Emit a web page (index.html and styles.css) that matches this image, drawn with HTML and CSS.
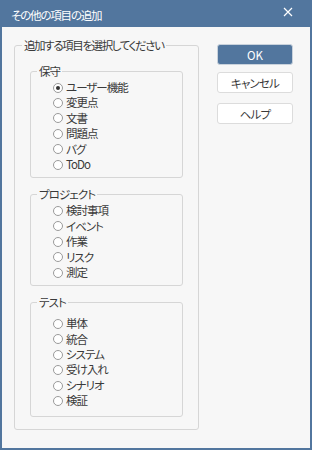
FILE: index.html
```html
<!doctype html>
<html>
    <head>
        <meta charset="utf-8">
        <title>その他の項目の追加</title>
        <link rel="stylesheet" href="styles.css">
    </head>
    <body>
        <div class="window">
            <div class="titlebar">
                <span class="title">その他の項目の追加</span>
                <svg class="close" width="10" height="10" viewBox="0 0 10 10">
                    <path d="M1 1 L9 9 M9 1 L1 9" stroke="#fff" stroke-width="1.2" fill="none"/>
                </svg>
            </div>
            <div class="content">
                <fieldset class="group outer">
                    <legend>追加する項目を選択してください</legend>

                    <fieldset class="group inner first">
                        <legend>保守</legend>
                        <label class="item"><input type="radio" name="kind" checked> ユーザー機能</label>
                        <label class="item"><input type="radio" name="kind"> 変更点</label>
                        <label class="item"><input type="radio" name="kind"> 文書</label>
                        <label class="item"><input type="radio" name="kind"> 問題点</label>
                        <label class="item"><input type="radio" name="kind"> バグ</label>
                        <label class="item"><input type="radio" name="kind"> ToDo</label>
                    </fieldset>

                    <fieldset class="group inner">
                        <legend>プロジェクト</legend>
                        <label class="item"><input type="radio" name="kind"> 検討事項</label>
                        <label class="item"><input type="radio" name="kind"> イベント</label>
                        <label class="item"><input type="radio" name="kind"> 作業</label>
                        <label class="item"><input type="radio" name="kind"> リスク</label>
                        <label class="item"><input type="radio" name="kind"> 測定</label>
                    </fieldset>

                    <fieldset class="group inner last">
                        <legend>テスト</legend>
                        <label class="item"><input type="radio" name="kind"> 単体</label>
                        <label class="item"><input type="radio" name="kind"> 統合</label>
                        <label class="item"><input type="radio" name="kind"> システム</label>
                        <label class="item"><input type="radio" name="kind"> 受け入れ</label>
                        <label class="item"><input type="radio" name="kind"> シナリオ</label>
                        <label class="item"><input type="radio" name="kind"> 検証</label>
                    </fieldset>
                </fieldset>

                <div class="buttons">
                    <button class="btn primary">OK</button>
                    <button class="btn">キャンセル</button>
                    <button class="btn help">ヘルプ</button>
                </div>
            </div>
        </div>
    </body>
</html>
```

FILE: styles.css
```css
* {
    font-family: "Noto Sans CJK JP", "Noto Sans", sans-serif;
    font-feature-settings: "palt";
    box-sizing: border-box;
}

body {
    margin: 0;
    padding: 0;
    background: #fff;
}

.window {
    width: 312px;
    height: 450px;
    display: flex;
    flex-direction: column;
    background: #52769e;
    padding: 0 2px 2px 2px;
}

.titlebar {
    height: 27px;
    display: flex;
    align-items: center;
    justify-content: space-between;
    padding: 0 17px 4px 9px;
}

.title {
    color: #fff;
    font-size: 11.5px;
    letter-spacing: -1.2px;
    padding-top: 6px;
}

.close {
    margin-top: 1px;
}

.content {
    flex: 1;
    display: flex;
    align-items: flex-start;
    background: #f7f7f7;
    padding: 10px 17px 0 12px;
    gap: 18px;
}

.group {
    margin: 0;
    min-width: 0;
    border: 1px solid #d6d6d6;
    border-radius: 3px;
    font-size: 11.5px;
    color: #3a3a3a;
}

.group legend {
    font-size: 11.5px;
    line-height: 16px;
    padding: 0 2px;
    color: #3a3a3a;
    white-space: nowrap;
    letter-spacing: -0.9px;
}

.outer {
    width: 185px;
    flex: none;
    padding: 0 15px 12px 15px;
}

.outer > legend {
    margin-left: -8px;
    letter-spacing: -1.4px;
}

.inner {
    width: 153px;
    margin-top: 8px;
    padding: 1px 0 5px 22px;
}

.inner.first {
    margin-top: 10px;
}

.inner.last {
    padding-top: 6px;
    padding-bottom: 7px;
}

.inner > legend {
    margin-left: -16px;
}

.item {
    display: flex;
    align-items: center;
    height: 15.4px;
    line-height: 15.4px;
    white-space: nowrap;
    letter-spacing: -1px;
}

.item input {
    appearance: none;
    margin: 0 3px 0 0;
    width: 10px;
    height: 10px;
    border: 1px solid #9a9a9a;
    border-radius: 50%;
    background: #fff;
    display: flex;
    align-items: center;
    justify-content: center;
}

.item input:checked::after {
    content: "";
    width: 4px;
    height: 4px;
    border-radius: 50%;
    background: #333;
}

.buttons {
    display: flex;
    flex-direction: column;
    margin-top: 7px;
    gap: 7px;
}

.btn {
    width: 76px;
    height: 21px;
    border: 1px solid #dcdcdc;
    border-radius: 3px;
    background: #fff;
    color: #3a3a3a;
    font-size: 11.5px;
    letter-spacing: -0.8px;
    padding: 0;
}

.primary {
    background: #52769e;
    border-color: #c9d2dc;
    color: #fff;
    letter-spacing: 0;
}

.help {
    margin-top: 3px;
}
```
